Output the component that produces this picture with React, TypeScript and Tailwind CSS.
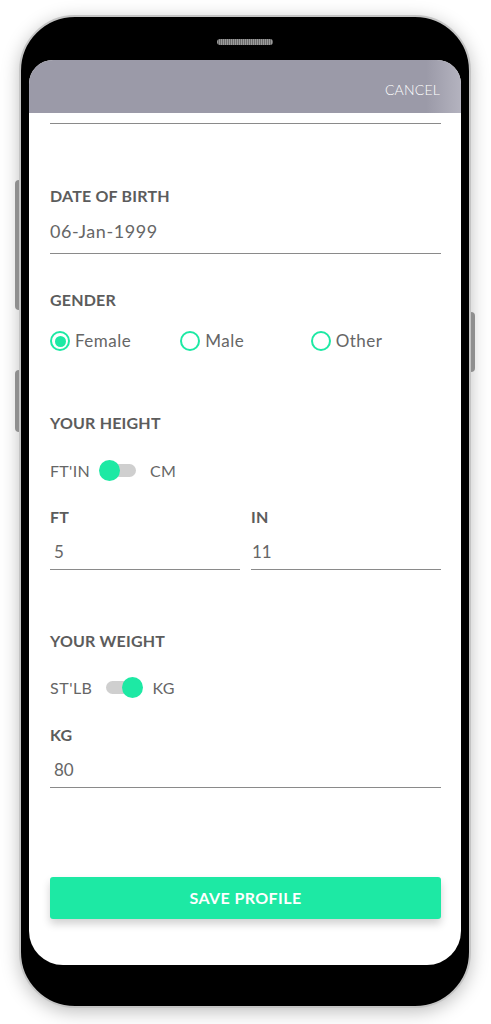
import { useState } from 'react';

const font = { fontFamily: 'Lato, "Noto Sans", sans-serif' };

type Gender = 'female' | 'male' | 'other';

const Radio = ({ label, checked, onClick }: { label: string; checked: boolean; onClick: () => void }) => (
  <button onClick={onClick} className="flex w-[131px] items-center gap-[5px] text-left">
    <span className="flex h-[20px] w-[20px] items-center justify-center rounded-full border-[2.5px] border-[#1de9a4]">
      {checked && <span className="h-[11px] w-[11px] rounded-full bg-[#1de9a4]" />}
    </span>
    <span className="text-[17px] leading-[20px] tracking-[0.5px] text-[#666]">{label}</span>
  </button>
);

const Toggle = ({ on, onClick }: { on: boolean; onClick: () => void }) => (
  <button onClick={onClick} className={`relative flex h-[21px] w-[42px] items-center ${on ? 'justify-end' : 'justify-start'}`}>
    <span className="absolute left-[5px] right-[5px] top-[4px] h-[13px] rounded-full bg-[#cfcfcf]" />
    <span className="relative h-[21px] w-[21px] rounded-full bg-[#1de9a4]" />
  </button>
);

const Label = ({ children, className = '' }: { children: React.ReactNode; className?: string }) => (
  <div className={`text-[16px] font-bold leading-[20px] tracking-[0.2px] text-[#5c5c5c] ${className}`}>{children}</div>
);

const App = () => {
  const [gender, setGender] = useState<Gender>('female');
  const [metricHeight, setMetricHeight] = useState(false);
  const [metricWeight, setMetricWeight] = useState(true);

  return (
    <div className="h-[1024px] w-[491px] overflow-hidden bg-white pt-[15px]" style={font}>
      <div className="relative ml-[19px] h-[993px] w-[452px] rounded-[56px] border-[2px] border-[#c4c4c4] bg-black px-[8px] pb-[41px] pt-[43px] shadow-[0_4px_18px_rgba(0,0,0,0.25)]">
        {/* side buttons */}
        <div className="absolute left-[-6px] top-[163px] h-[130px] w-[4px] rounded-l-sm bg-[#8f8f8f]" />
        <div className="absolute left-[-6px] top-[353px] h-[62px] w-[4px] rounded-l-sm bg-[#8f8f8f]" />
        <div className="absolute right-[-6px] top-[295px] h-[60px] w-[4px] rounded-r-sm bg-[#8f8f8f]" />
        {/* speaker */}
        <div className="absolute left-[196px] top-[22px] h-[6px] w-[56px] rounded-full bg-[repeating-linear-gradient(90deg,#9a9a9a_0px,#9a9a9a_1px,#6a6a6a_1px,#6a6a6a_2px)]" />

        <div className="flex h-full flex-col overflow-hidden rounded-b-[34px] rounded-t-[24px] bg-white">
          <div className="flex h-[53px] shrink-0 items-center justify-end bg-[linear-gradient(90deg,#9b9aa8_0%,#9b9aa8_92%,#b4b3bf_100%)] pr-[21px] pt-[5px]">
            <button className="text-[14px] font-light tracking-[0.2px] text-white">CANCEL</button>
          </div>

          <div className="pl-[21px] pr-[20px]">
            <div className="mt-[10px] border-b border-[#8a8a8a]" />

            <Label className="mt-[62px]">DATE OF BIRTH</Label>
            <div className="mt-[13px] border-b border-[#8a8a8a] pb-[10px] text-[18px] leading-[24px] tracking-[0.6px] text-[#666]">
              06-Jan-1999
            </div>

            <Label className="mt-[36px]">GENDER</Label>
            <div className="mt-[21px] flex">
              <Radio label="Female" checked={gender === 'female'} onClick={() => setGender('female')} />
              <Radio label="Male" checked={gender === 'male'} onClick={() => setGender('male')} />
              <Radio label="Other" checked={gender === 'other'} onClick={() => setGender('other')} />
            </div>

            <Label className="mt-[62px]">YOUR HEIGHT</Label>
            <div className="mt-[27px] flex items-center gap-[9px] text-[16px] leading-[20px] tracking-[0.3px] text-[#666]">
              <span>FT'IN</span>
              <Toggle on={metricHeight} onClick={() => setMetricHeight(!metricHeight)} />
              <span>CM</span>
            </div>

            <div className="mt-[26px] grid grid-cols-2 gap-[11px]">
              <div>
                <Label>FT</Label>
                <div className="mt-[13px] border-b border-[#8a8a8a] pb-[5px] pl-[4px] text-[17px] leading-[24px] text-[#666]">5</div>
              </div>
              <div>
                <Label>IN</Label>
                <div className="mt-[13px] border-b border-[#8a8a8a] pb-[5px] pl-[1px] text-[17px] leading-[24px] text-[#666]">11</div>
              </div>
            </div>

            <Label className="mt-[61px]">YOUR WEIGHT</Label>
            <div className="mt-[26px] flex items-center gap-[9px] text-[16px] leading-[20px] tracking-[0.5px] text-[#666]">
              <span>ST'LB</span>
              <Toggle on={metricWeight} onClick={() => setMetricWeight(!metricWeight)} />
              <span>KG</span>
            </div>

            <Label className="mt-[27px]">KG</Label>
            <div className="mt-[13px] border-b border-[#8a8a8a] pb-[5px] pl-[4px] text-[17px] leading-[24px] text-[#666]">80</div>

            <button className="mt-[89px] flex h-[42px] w-full items-center justify-center rounded-[3px] bg-[#1de9a4] text-[16px] font-bold tracking-[0.4px] text-white shadow-[0_5px_8px_rgba(0,0,0,0.18)]">
              SAVE PROFILE
            </button>
          </div>
        </div>
      </div>
    </div>
  );
};

export default App;
